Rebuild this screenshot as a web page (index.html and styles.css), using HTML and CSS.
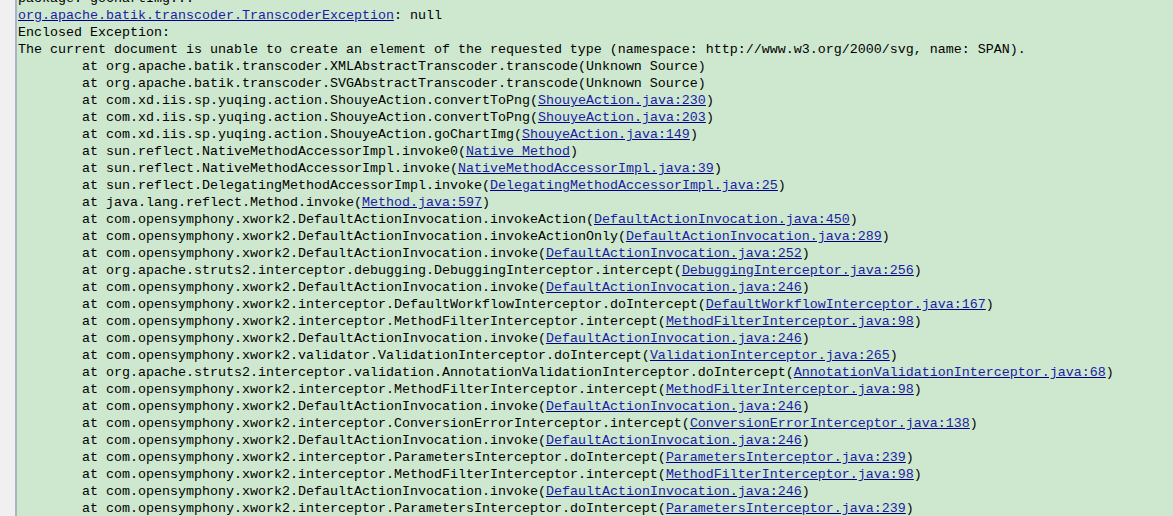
FILE: index.html
```html
<!DOCTYPE html>
<html lang="en">
<head>
    <meta charset="UTF-8">
    <title>Exception</title>
    <link rel="stylesheet" href="styles.css">
</head>
<body>
    <div class="gutter"></div>
    <div class="console">
<pre class="trace">package: goChartImg...
<a href="#">org.apache.batik.transcoder.TranscoderException</a>: null
Enclosed Exception:
The current document is unable to create an element of the requested type (namespace: http://www.w3.org/2000/svg, name: SPAN).
	at org.apache.batik.transcoder.XMLAbstractTranscoder.transcode(Unknown Source)
	at org.apache.batik.transcoder.SVGAbstractTranscoder.transcode(Unknown Source)
	at com.xd.iis.sp.yuqing.action.ShouyeAction.convertToPng(<a href="#">ShouyeAction.java:230</a>)
	at com.xd.iis.sp.yuqing.action.ShouyeAction.convertToPng(<a href="#">ShouyeAction.java:203</a>)
	at com.xd.iis.sp.yuqing.action.ShouyeAction.goChartImg(<a href="#">ShouyeAction.java:149</a>)
	at sun.reflect.NativeMethodAccessorImpl.invoke0(<a href="#">Native Method</a>)
	at sun.reflect.NativeMethodAccessorImpl.invoke(<a href="#">NativeMethodAccessorImpl.java:39</a>)
	at sun.reflect.DelegatingMethodAccessorImpl.invoke(<a href="#">DelegatingMethodAccessorImpl.java:25</a>)
	at java.lang.reflect.Method.invoke(<a href="#">Method.java:597</a>)
	at com.opensymphony.xwork2.DefaultActionInvocation.invokeAction(<a href="#">DefaultActionInvocation.java:450</a>)
	at com.opensymphony.xwork2.DefaultActionInvocation.invokeActionOnly(<a href="#">DefaultActionInvocation.java:289</a>)
	at com.opensymphony.xwork2.DefaultActionInvocation.invoke(<a href="#">DefaultActionInvocation.java:252</a>)
	at org.apache.struts2.interceptor.debugging.DebuggingInterceptor.intercept(<a href="#">DebuggingInterceptor.java:256</a>)
	at com.opensymphony.xwork2.DefaultActionInvocation.invoke(<a href="#">DefaultActionInvocation.java:246</a>)
	at com.opensymphony.xwork2.interceptor.DefaultWorkflowInterceptor.doIntercept(<a href="#">DefaultWorkflowInterceptor.java:167</a>)
	at com.opensymphony.xwork2.interceptor.MethodFilterInterceptor.intercept(<a href="#">MethodFilterInterceptor.java:98</a>)
	at com.opensymphony.xwork2.DefaultActionInvocation.invoke(<a href="#">DefaultActionInvocation.java:246</a>)
	at com.opensymphony.xwork2.validator.ValidationInterceptor.doIntercept(<a href="#">ValidationInterceptor.java:265</a>)
	at org.apache.struts2.interceptor.validation.AnnotationValidationInterceptor.doIntercept(<a href="#">AnnotationValidationInterceptor.java:68</a>)
	at com.opensymphony.xwork2.interceptor.MethodFilterInterceptor.intercept(<a href="#">MethodFilterInterceptor.java:98</a>)
	at com.opensymphony.xwork2.DefaultActionInvocation.invoke(<a href="#">DefaultActionInvocation.java:246</a>)
	at com.opensymphony.xwork2.interceptor.ConversionErrorInterceptor.intercept(<a href="#">ConversionErrorInterceptor.java:138</a>)
	at com.opensymphony.xwork2.DefaultActionInvocation.invoke(<a href="#">DefaultActionInvocation.java:246</a>)
	at com.opensymphony.xwork2.interceptor.ParametersInterceptor.doIntercept(<a href="#">ParametersInterceptor.java:239</a>)
	at com.opensymphony.xwork2.interceptor.MethodFilterInterceptor.intercept(<a href="#">MethodFilterInterceptor.java:98</a>)
	at com.opensymphony.xwork2.DefaultActionInvocation.invoke(<a href="#">DefaultActionInvocation.java:246</a>)
	at com.opensymphony.xwork2.interceptor.ParametersInterceptor.doIntercept(<a href="#">ParametersInterceptor.java:239</a>)
</pre>
    </div>
</body>
</html>
```

FILE: styles.css
```css
html, body {
    height: 100%;
}

body {
    margin: 0;
    display: flex;
    overflow: hidden;
    background-color: #cde8cf;
}

.gutter {
    width: 15px;
    flex-shrink: 0;
    background-color: #f0f0f0;
    border-right: 2px solid #a9b5c3;
}

.console {
    flex: 1;
    padding-left: 1px;
}

.trace {
    margin: -10px 0 0 0;
    font-family: "Liberation Mono", "Courier New", monospace;
    font-size: 13.33px;
    line-height: 17px;
    color: #000;
    tab-size: 8;
    white-space: pre;
}

.trace a {
    color: #1c1ca6;
    text-decoration: underline;
    text-decoration-color: #000080;
}
```
